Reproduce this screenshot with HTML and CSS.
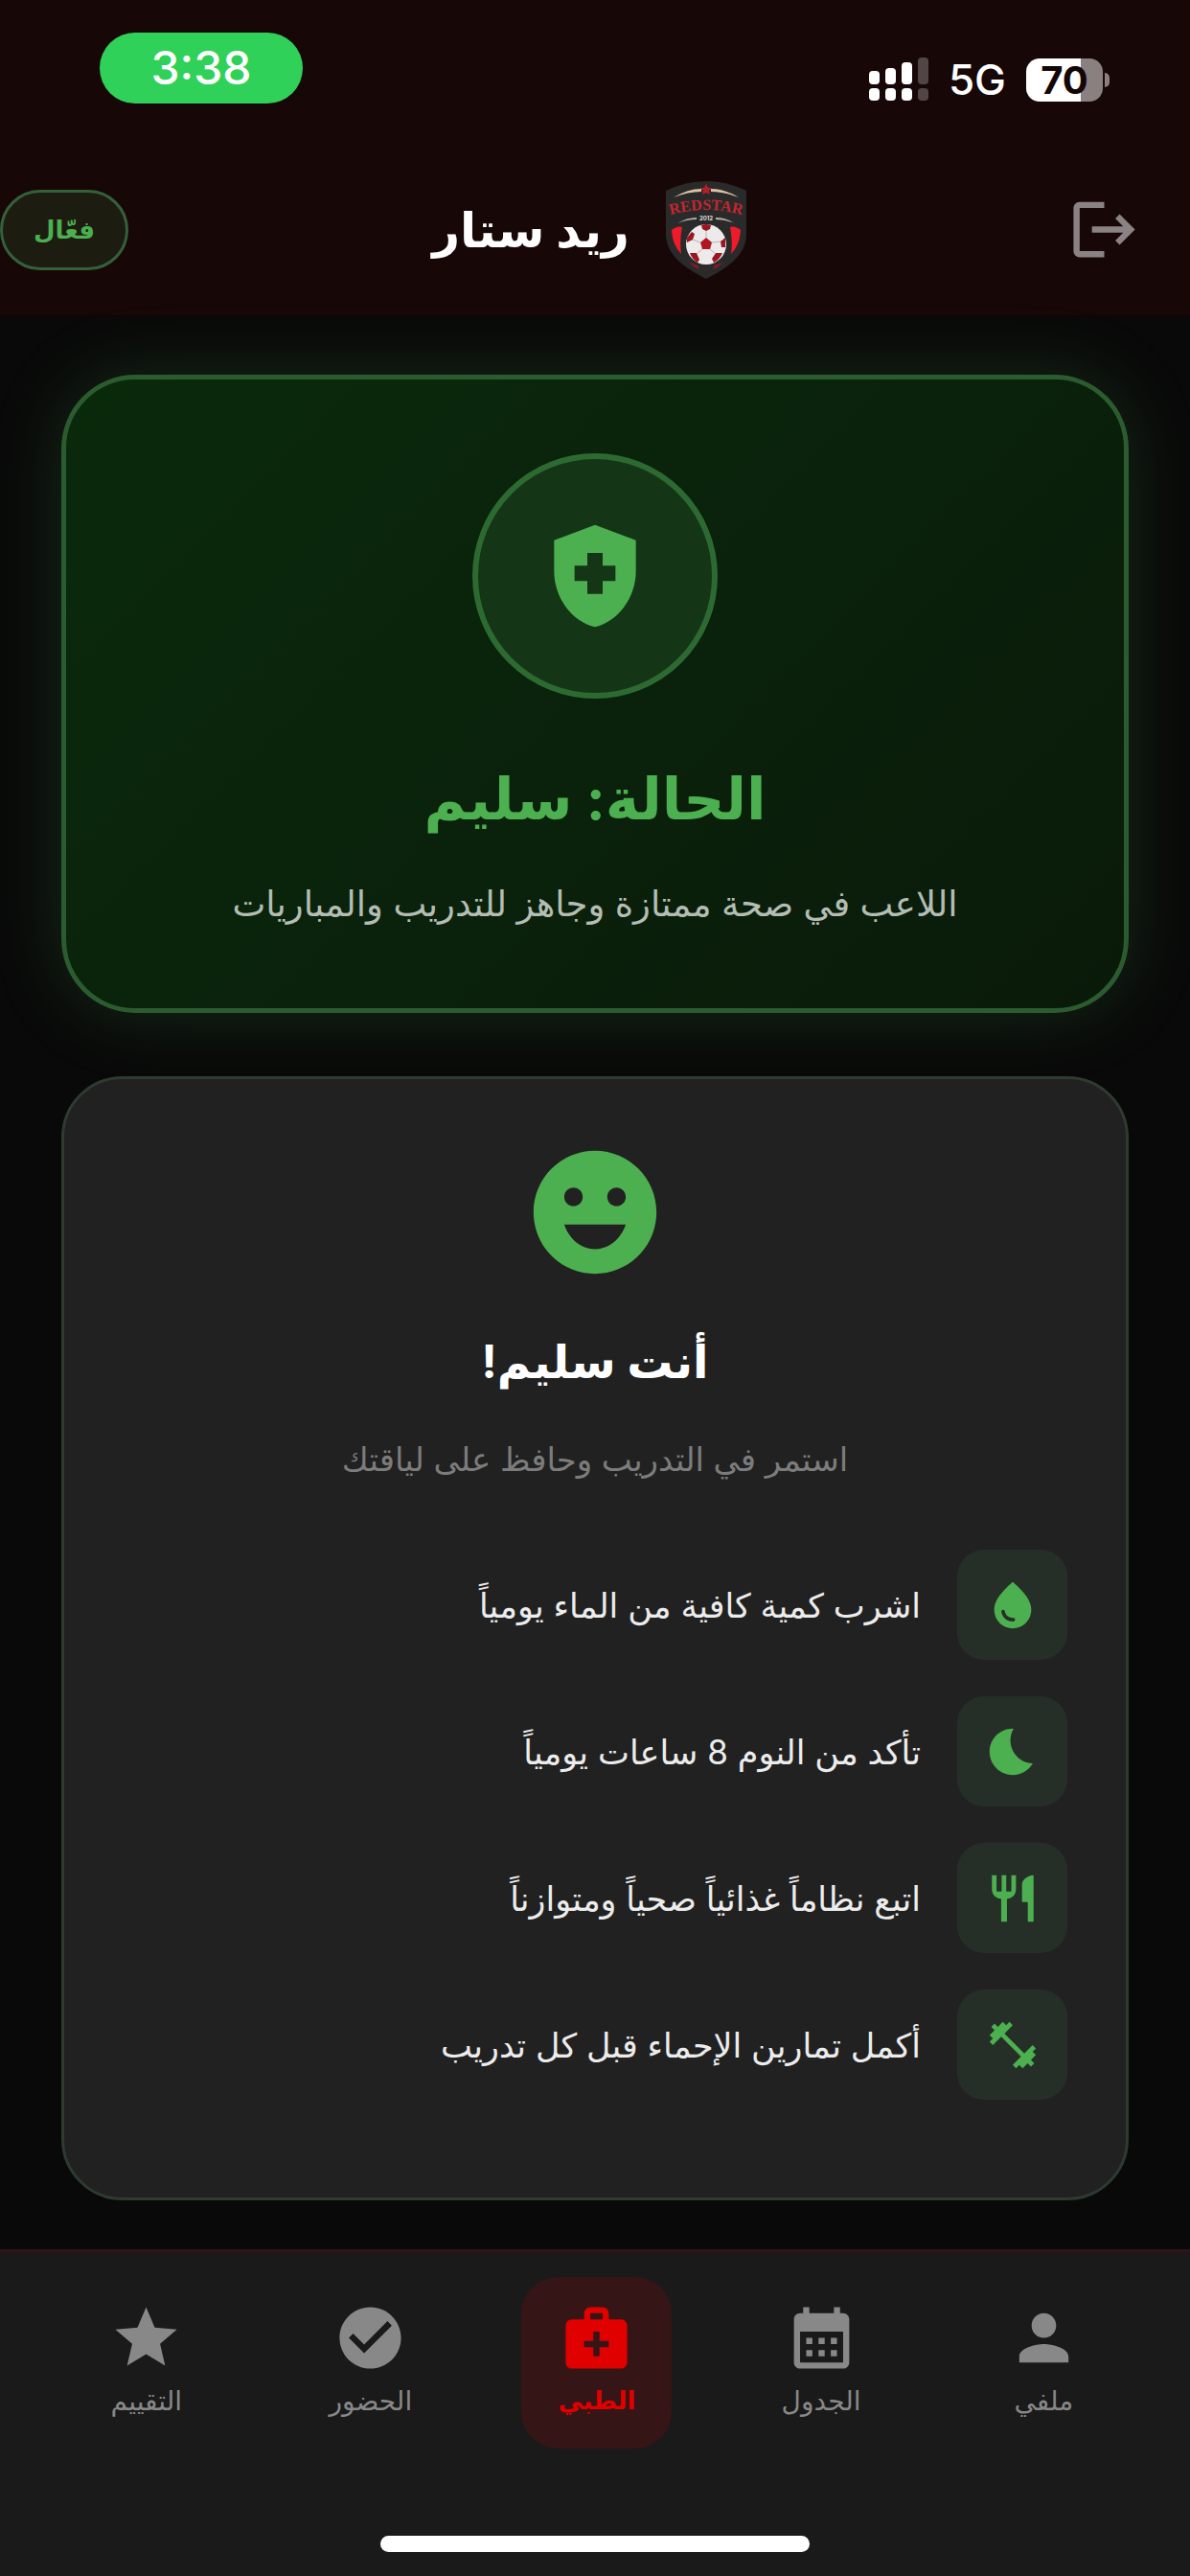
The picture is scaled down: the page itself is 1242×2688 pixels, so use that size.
FILE: index.html
```html
<!DOCTYPE html>
<html lang="ar" dir="rtl">
<head>
  <meta charset="UTF-8">
  <meta name="viewport" content="width=device-width, initial-scale=1.0">
  <title>ريد ستار - الحالة الطبية</title>
  <link rel="stylesheet" href="styles.css">
</head>
<body>
  <div class="top">
    <div class="status-bar" dir="ltr">
      <span class="clock">3:38</span>
      <div class="status-icons">
        <svg class="signal" viewBox="0 0 62 46" fill="#fff">
          <rect x="0" y="14" width="11" height="14" rx="4"/>
          <rect x="17" y="11" width="11" height="17" rx="4"/>
          <rect x="34" y="5" width="11" height="23" rx="4"/>
          <rect x="51" y="0" width="11" height="28" rx="4" opacity=".25"/>
          <rect x="0" y="32" width="11" height="13" rx="4"/>
          <rect x="17" y="32" width="11" height="13" rx="4"/>
          <rect x="34" y="32" width="11" height="13" rx="4"/>
          <rect x="51" y="32" width="11" height="13" rx="4" opacity=".25"/>
        </svg>
        <span class="network">5G</span>
        <span class="battery">70</span>
      </div>
    </div>

    <header>
      <button class="logout" aria-label="تسجيل الخروج">
        <svg viewBox="0 0 24 24"><path d="M17 7l-1.41 1.41L18.17 11H8v2h10.17l-2.58 2.58L17 17l5-5zM4 5h8V3H4c-1.1 0-2 .9-2 2v14c0 1.1.9 2 2 2h8v-2H4V5z"/></svg>
      </button>
      <div class="brand">
        <svg class="crest" viewBox="-11 -2 108 108">
          <path d="M1 11Q22 1 43 1Q64 1 85 11V56C85 80 62 93 43 103C24 93 1 80 1 56Z" fill="#2b2a2b"/>
          <path d="M9 18Q24 9 38 9V12Q24 12 9 18ZM77 18Q62 9 48 9V12Q62 12 77 18Z" fill="#d9c3a0"/>
          <path d="M43 4L45 8H49L46 11L47 15L43 13L39 15L40 11L37 8H41Z" fill="#b3202a"/>
          <path id="arc" d="M3 37Q43 25 83 37" fill="none"/>
          <text class="crest-name" direction="ltr"><textPath href="#arc" startOffset="50%">REDSTAR</textPath></text>
          <text class="crest-year" x="43" y="42" direction="ltr">2012</text>
          <path d="M13 45Q23 39 33 39V41Q23 41 13 45ZM73 45Q63 39 53 39V41Q63 41 73 45Z" fill="#b9b0a4"/>
          <path d="M7 52Q13 47 18 49Q15 63 17 77Q8 68 7 52ZM79 52Q73 47 68 49Q71 63 69 77Q78 68 79 52Z" fill="#ee1c2b"/>
          <circle cx="43" cy="67" r="21" fill="#eceaea"/>
          <path d="M43 60L49 65L47 72H39L37 65Z" fill="#b01520"/>
          <path d="M38 47Q43 45 48 47L47 51L43 53L39 51ZM23 60L28 54L31 56L29 62L23 65ZM63 60L58 64L59 70L63 70ZM26 76L33 76L36 83L34 86Q28 82 26 76ZM60 76L53 76L49 82L51 86Q57 83 60 76Z" fill="#9c1620"/>
          <path d="M43 53V60M49 65L58 64M47 72L53 77M39 72L33 77M37 65L29 62" stroke="#b8b4b4" stroke-width="1"/>
          <path d="M26 86Q30 91 36 93L34 89ZM60 86Q56 91 50 93L52 89Z" fill="#8f1a22"/>
        </svg>
        <h1>ريد ستار</h1>
      </div>
      <span class="chip">فعّال</span>
    </header>
  </div>

  <main>
    <section class="status-card">
      <div class="status-ring">
        <svg viewBox="0 0 24 24"><path d="M10.5 13H8v-3h2.5V7.5h3V10H16v3h-2.5v2.5h-3V13zM12 2L4 5v6.09c0 5.05 3.41 9.76 8 10.91 4.59-1.15 8-5.86 8-10.91V5l-8-3z"/></svg>
      </div>
      <h2>الحالة: سليم</h2>
      <p>اللاعب في صحة ممتازة وجاهز للتدريب والمباريات</p>
    </section>

    <section class="tips-card">
      <svg class="smiley" viewBox="0 0 24 24"><path d="M11.99 2C6.47 2 2 6.48 2 12s4.47 10 9.99 10C17.52 22 22 17.52 22 12S17.52 2 11.99 2zM8.5 8c.83 0 1.5.67 1.5 1.5S9.33 11 8.5 11 7 10.33 7 9.5 7.67 8 8.5 8zM12 18c-2.28 0-4.22-1.66-5-4h10c-.78 2.34-2.72 4-5 4zm3.5-7c-.83 0-1.5-.67-1.5-1.5S14.67 8 15.5 8s1.5.67 1.5 1.5-.67 1.5-1.5 1.5z"/></svg>
      <h2>أنت سليم!</h2>
      <p>استمر في التدريب وحافظ على لياقتك</p>
      <ul>
        <li>
          <span class="tip-icon"><svg viewBox="0 0 24 24"><path fill-rule="evenodd" d="M12 2c-5.33 4.55-8 8.48-8 11.8 0 4.98 3.8 8.2 8 8.2s8-3.22 8-8.2c0-3.32-2.67-7.25-8-11.8zM7.83 14c.37 0 .67.26.74.62.41 2.22 2.28 2.98 3.64 2.87.43-.02.79.32.79.75 0 .4-.32.73-.72.75-2.13.13-4.62-1.09-5.19-4.12-.08-.45.28-.87.74-.87z"/></svg></span>
          اشرب كمية كافية من الماء يومياً
        </li>
        <li>
          <span class="tip-icon"><svg viewBox="0 0 24 24"><path d="M12.34 2.02C6.59 1.82 2 6.42 2 12c0 5.52 4.48 10 10 10 3.71 0 6.93-2.02 8.66-5.02-7.51-.25-12.09-8.43-8.32-14.96z"/></svg></span>
          تأكد من النوم 8 ساعات يومياً
        </li>
        <li>
          <span class="tip-icon"><svg viewBox="0 0 24 24"><path d="M13.4 8c0 2.4-1.7 4-3.9 4.2V22H7v-9.8C4.7 12 3 10.4 3 8V2h2v7h2.2V2h2v7h2.2V2h2zM16 6v7.5h2.5V22H21V2c-2.76 0-5 2.24-5 4z"/></svg></span>
          اتبع نظاماً غذائياً صحياً ومتوازناً
        </li>
        <li>
          <span class="tip-icon"><svg viewBox="0 0 24 24"><path d="M20.57 14.86L22 13.43 20.57 12 17 15.57 8.43 7 12 3.43 10.57 2 9.14 3.43 7.71 2 5.57 4.14 4.14 2.71 2.71 4.14l1.43 1.43L2 7.71l1.43 1.43L2 10.57 3.43 12 7 8.43 15.57 17 12 20.57 13.43 22l1.43-1.43L16.29 22l2.14-2.14 1.43 1.43 1.43-1.43-1.43-1.43L22 16.29z"/></svg></span>
          أكمل تمارين الإحماء قبل كل تدريب
        </li>
      </ul>
    </section>
  </main>

  <footer>
    <nav>
      <a href="#profile">
        <svg viewBox="0 0 24 24"><path d="M12 12c2.21 0 4-1.79 4-4s-1.79-4-4-4-4 1.79-4 4 1.79 4 4 4zm0 2c-2.67 0-8 1.34-8 4v2h16v-2c0-2.66-5.33-4-8-4z"/></svg>
        ملفي
      </a>
      <a href="#schedule">
        <svg viewBox="0 0 24 24"><path d="M19 4h-1V2h-2v2H8V2H6v2H5c-1.11 0-1.99.9-1.99 2L3 20c0 1.1.89 2 2 2h14c1.1 0 2-.9 2-2V6c0-1.1-.9-2-2-2zm0 16H5V10h14v10zM9 14H7v-2h2v2zm4 0h-2v-2h2v2zm4 0h-2v-2h2v2zm-8 4H7v-2h2v2zm4 0h-2v-2h2v2zm4 0h-2v-2h2v2z"/></svg>
        الجدول
      </a>
      <a href="#medical" class="active">
        <svg viewBox="0 0 24 24"><path d="M20 6h-4V4c0-1.1-.9-2-2-2h-4c-1.1 0-2 .9-2 2v2H4c-1.1 0-2 .9-2 2v12c0 1.1.9 2 2 2h16c1.1 0 2-.9 2-2V8c0-1.1-.9-2-2-2zM10 4h4v2h-4V4zm6 11h-3v3h-2v-3H8v-2h3v-3h2v3h3v2z"/></svg>
        الطبي
      </a>
      <a href="#attendance">
        <svg viewBox="0 0 24 24"><path d="M12 2C6.48 2 2 6.48 2 12s4.48 10 10 10 10-4.48 10-10S17.52 2 12 2zm-2 15l-5-5 1.41-1.41L10 14.17l7.59-7.59L19 8l-9 9z"/></svg>
        الحضور
      </a>
      <a href="#rating">
        <svg viewBox="0 0 24 24"><path d="M12 17.27L18.18 21l-1.64-7.03L22 9.24l-7.19-.61L12 2 9.19 8.63 2 9.24l5.46 4.73L5.82 21z"/></svg>
        التقييم
      </a>
    </nav>
    <div class="home-indicator"></div>
  </footer>
</body>
</html>
```

FILE: styles.css
```css
* {
  box-sizing: border-box;
}
body {
  font-family: Inter, 'DejaVu Sans', sans-serif;
  margin: 0;
  min-height: 100vh;
  display: flex;
  flex-direction: column;
  background-color: #090909;
  color: white;
}
h1, h2, p, ul {
  margin: 0;
}
svg {
  display: block;
  fill: currentColor;
}

/* top */
.top {
  background-color: #180707;
}
.status-bar {
  display: flex;
  justify-content: space-between;
  padding: 34px 84px 0 104px;
  height: 150px;
}
.clock {
  width: 212px;
  height: 74px;
  border-radius: 37px;
  background-color: #30d158;
  font-size: 48px;
  font-weight: 500;
  line-height: 74px;
  text-align: center;
}
.status-icons {
  display: flex;
  align-items: center;
  gap: 21px;
  height: 98px;
}
.signal {
  width: 62px;
  height: 46px;
}
.network {
  font-size: 44px;
  font-weight: 500;
}
.battery {
  position: relative;
  width: 80px;
  height: 45px;
  margin-right: 7px;
  border-radius: 14px;
  background: linear-gradient(to right, #fff 71%, #8b8080 71%);
  color: #150606;
  font-size: 40px;
  font-weight: 700;
  line-height: 45px;
  text-align: center;
}
.battery::after {
  content: '';
  position: absolute;
  left: 82px;
  top: 15px;
  width: 5px;
  height: 15px;
  border-radius: 0 5px 5px 0;
  background-color: #8b8080;
}
header {
  display: grid;
  grid-template-columns: 1fr auto 1fr;
  align-items: center;
  height: 179px;
}
.logout {
  justify-self: start;
  margin-right: 51px;
  padding: 0;
  border: none;
  background: none;
  color: #8b8383;
  cursor: pointer;
}
.logout svg {
  width: 77px;
  height: 77px;
}
.brand {
  display: flex;
  align-items: center;
  gap: 26px;
}
.crest {
  width: 108px;
  height: 108px;
}
.crest-name {
  font-family: 'Liberation Serif', serif;
  font-size: 16px;
  font-weight: 700;
  fill: #c3272f;
  text-anchor: middle;
}
.crest-year {
  font-size: 6px;
  font-weight: 700;
  fill: #ddd;
  text-anchor: middle;
}
h1 {
  font-size: 50px;
  line-height: 72px;
}
.chip {
  justify-self: end;
  padding: 0 32px;
  border: 3px solid #35603a;
  border-radius: 42px;
  background-color: #1d1c10;
  color: #4caf50;
  font-size: 26px;
  font-weight: 700;
  line-height: 78px;
}

/* cards */
main {
  flex: 1;
  display: flex;
  flex-direction: column;
  gap: 66px;
  padding: 62px 64px 48px;
}
.status-card, .tips-card {
  display: flex;
  flex-direction: column;
  align-items: center;
}
.status-card {
  padding: 77px 64px 79px;
  border: 5px solid #2b5c2f;
  border-radius: 77px;
  background: linear-gradient(135deg, #0a2a0c, #0a1a0a);
  box-shadow: 0 0 77px rgba(76, 175, 80, 0.2);
}
.status-ring {
  display: flex;
  align-items: center;
  justify-content: center;
  width: 256px;
  height: 256px;
  border: 6px solid #2d6a32;
  border-radius: 50%;
  background-color: #143617;
  color: #4caf50;
}
.status-ring svg {
  width: 128px;
  height: 128px;
}
.status-card h2 {
  margin-top: 58px;
  color: #4caf50;
  font-size: 60px;
  line-height: 92px;
}
.status-card p {
  margin-top: 34px;
  color: #b4bdb4;
  font-size: 37px;
  line-height: 60px;
}
.tips-card {
  padding: 62px 61px 102px;
  border: 3px solid #2e3b30;
  border-radius: 64px;
  background-color: #212121;
}
.smiley {
  width: 154px;
  height: 154px;
  color: #4caf50;
}
.tips-card h2 {
  margin-top: 39px;
  font-size: 48px;
  line-height: 80px;
}
.tips-card p {
  margin-top: 32px;
  color: #7c7c7c;
  font-size: 34px;
  line-height: 60px;
}
ul {
  align-self: stretch;
  display: flex;
  flex-direction: column;
  gap: 38px;
  margin-top: 64px;
  padding: 0;
  list-style: none;
}
li {
  display: flex;
  align-items: center;
  gap: 38px;
  color: #ececec;
  font-size: 35px;
}
.tip-icon {
  display: flex;
  align-items: center;
  justify-content: center;
  width: 115px;
  height: 115px;
  border-radius: 28px;
  background-color: #262f27;
  color: #4caf50;
}
.tip-icon svg {
  width: 58px;
  height: 58px;
}

/* bottom nav */
footer {
  border-top: 4px solid #2e1616;
  background-color: #1a1a1a;
}
nav {
  display: flex;
  justify-content: space-evenly;
  padding-top: 25px;
}
nav a {
  display: flex;
  flex-direction: column;
  align-items: center;
  gap: 8px;
  padding: 25px 38px 31px;
  border-radius: 38px;
  color: #888;
  font-size: 28px;
  line-height: 38px;
  text-decoration: none;
}
nav svg {
  width: 77px;
  height: 77px;
}
nav .active {
  background-color: #351516;
  color: #e00000;
  font-size: 26px;
  font-weight: 700;
}
.home-indicator {
  width: 36%;
  height: 17px;
  margin: 91px auto 25px;
  border-radius: 9px;
  background-color: white;
}
```
